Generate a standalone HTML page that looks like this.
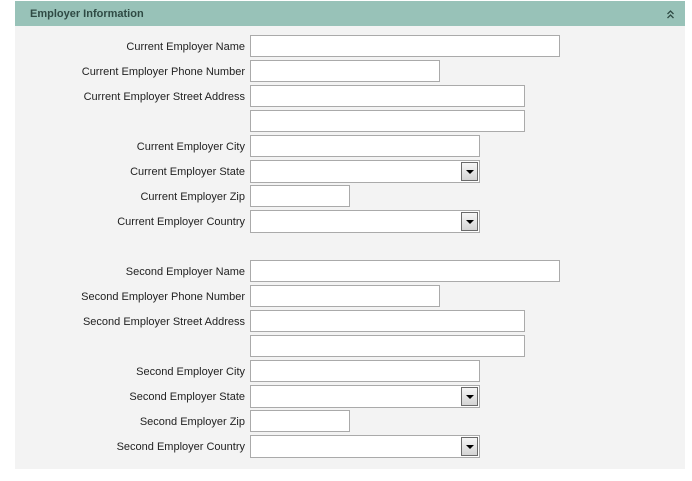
<!DOCTYPE html>
<html><head><style>
body{margin:0;background:#fff;width:692px;height:481px;position:relative;font-family:"Liberation Sans",Tahoma,sans-serif;overflow:hidden}
.hdr{position:absolute;left:15px;top:1px;width:670px;height:25px;background:#98c2b8}
.hdr span{position:absolute;left:15px;top:7px;font-size:11px;font-weight:bold;color:#2f4a44}
.hdr svg{position:absolute;right:11px;top:9px}
.panel{position:absolute;left:15px;top:26px;width:670px;height:443px;background:#f3f3f3}
.l{position:absolute;right:447px;font-size:11px;color:#222;white-space:nowrap}
.in{position:absolute;left:250px;height:20px;background:#fff;border:1px solid #aaa}
.sel .b{position:absolute;right:1px;top:1px;width:17px;height:19px;border:1px solid #6a6a6a;background:linear-gradient(#f6f6f6,#d4d4d4);box-sizing:border-box}
.sel .b:after{content:"";position:absolute;left:4px;top:7px;border-left:4px solid transparent;border-right:4px solid transparent;border-top:4px solid #000}
</style></head><body>
<div class="hdr"><span>Employer Information</span><svg width="7" height="9" viewBox="0 0 7 9"><path d="M0.5 4L3.5 1L6.5 4M0.5 8L3.5 5L6.5 8" fill="none" stroke="#2f4a44" stroke-width="1.3"/></svg></div>
<div class="panel"></div>
<div id="f"></div>
<script>
var rows=[["Name",310],["Phone Number",190],["Street Address",275],["",275],["City",230],["State",230,1],["Zip",100],["Country",230,1]];
var h="";
["Current","Second"].forEach(function(p,g){
rows.forEach(function(r,i){
var y=35+g*225+i*25;
if(r[0])h+='<div class="l" style="top:'+(y+6)+'px">'+p+' Employer '+r[0]+'</div>';
var ht=r[2]?21:20;
h+='<div class="in'+(r[2]?' sel':'')+'" style="top:'+y+'px;width:'+(r[1]-2)+'px;height:'+ht+'px">'+(r[2]?'<div class="b"></div>':'')+'</div>';
});});
document.getElementById("f").innerHTML=h;
</script>
</body></html>
